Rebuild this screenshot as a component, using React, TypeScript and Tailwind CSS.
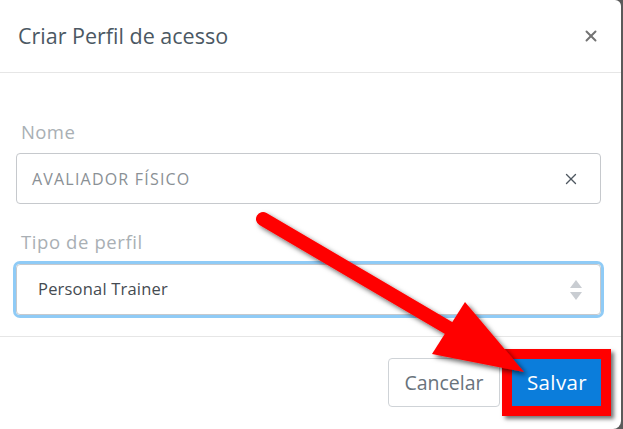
import React from 'react';
import { X } from 'lucide-react';

export default function App() {
  return (
    <div className="relative w-[623px] h-[429px] bg-[#5a5a5a] overflow-hidden" style={{ fontFamily: '"Open Sans", Lato, sans-serif' }}>
      {/* Modal */}
      <div className="w-[621px] h-[429px] bg-white rounded-tr-[6px] rounded-br-[8px] flex flex-col">
        {/* Header */}
        <div className="h-[73px] flex items-center justify-between pl-[18px] pr-[21px] border-b border-[#e6e6e6] shrink-0">
          <h2 className="text-[21.5px] text-[#4b5863]">Criar Perfil de acesso</h2>
          <X className="w-[18px] h-[18px] text-[#737373]" strokeWidth={2.6} />
        </div>

        {/* Body */}
        <div className="h-[264px] border-b border-[#e6e6e6] pl-[16px] pr-[20px] pt-[47px] shrink-0">
          <label className="block pl-[5px] text-[18.5px] leading-[24px] tracking-[0.4px] text-[#a9afb4]">Nome</label>
          <div className="mt-[9px] h-[51px] border border-[#c6c9cd] rounded-[4px] flex items-center justify-between pl-[15px] pr-[20px]">
            <span className="text-[16px] tracking-[1.2px] text-[#8a9095]">AVALIADOR FÍSICO</span>
            <X className="w-[18px] h-[18px] text-[#4f5861]" strokeWidth={1.8} />
          </div>
          <label className="block mt-[26px] pl-[5px] text-[18.5px] leading-[24px] tracking-[0.6px] text-[#a9afb4]">Tipo de perfil</label>
          <div className="mt-[10px] h-[51px] border border-[#c6c9cd] rounded-[4px] ring-[3px] ring-[#8fcbf6] flex items-center justify-between pl-[21px] pr-[17px]">
            <span className="text-[16.5px] tracking-[0.2px] text-[#454b51]">Personal Trainer</span>
            <svg width="14" height="22" viewBox="0 0 14 22">
              <path d="M7 1 L13 9 L1 9 Z" fill="#c9cdd2" />
              <path d="M1 13 L13 13 L7 21 Z" fill="#c9cdd2" />
            </svg>
          </div>
        </div>

        {/* Footer */}
        <div className="flex justify-end gap-[12px] pt-[21px] pr-[19px]">
          <button className="h-[49px] w-[112px] border border-[#cfd3d7] rounded-[4px] text-[19.5px] text-[#69737c] bg-white">Cancelar</button>
          <button className="h-[49px] w-[90px] bg-[#0b7ddb] text-[20.5px] tracking-[0.4px] text-white">Salvar</button>
        </div>
      </div>

      {/* Annotation: red box */}
      <div className="absolute left-[502px] top-[349px] w-[109px] h-[67px] border-[10px] border-[#ff0000] shadow-[3px_3px_4px_rgba(0,0,0,0.55)]" />

      {/* Annotation: arrow */}
      <svg className="absolute inset-0 pointer-events-none" width="623" height="429" viewBox="0 0 623 429">
        <defs>
          <filter id="sh" x="-10%" y="-10%" width="130%" height="130%">
            <feDropShadow dx="3" dy="3" stdDeviation="2.5" floodColor="#000" floodOpacity="0.6" />
          </filter>
        </defs>
        <g filter="url(#sh)" fill="#ff0000" stroke="none">
          <line x1="263" y1="219" x2="452" y2="330" stroke="#ff0000" strokeWidth="14" strokeLinecap="round" />
          <polygon points="465,302 432,354 524,372" />
        </g>
      </svg>
    </div>
  );
}
